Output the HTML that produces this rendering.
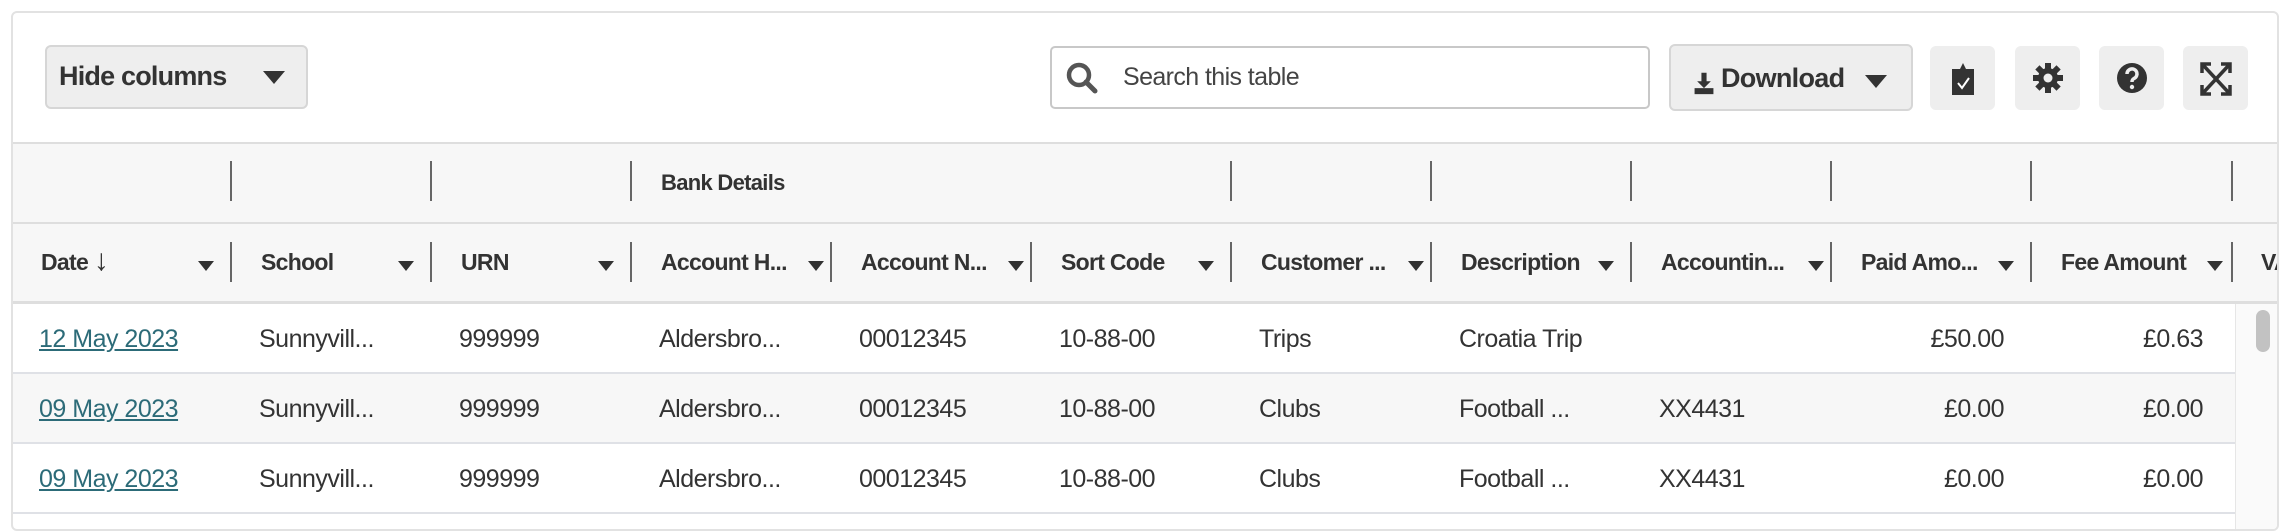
<!DOCTYPE html>
<html><head><meta charset="utf-8"><style>
*{box-sizing:border-box;margin:0;padding:0}
body{width:2290px;height:518px;background:#fff;font-family:"Liberation Sans",sans-serif;color:#333;position:relative;overflow:hidden}
.frame{position:absolute;left:11px;top:11px;width:2268px;height:520px;border:2px solid #e2e2e2;border-radius:6px;background:#fff;overflow:hidden}
.abs{position:absolute}
.btn{position:absolute;background:#eeeeee;border:2px solid #d6d6d6;border-radius:6px}
.hdr1{position:absolute;left:0;top:129px;width:2268px;height:82px;background:#f7f7f7;border-top:2px solid #dedede;border-bottom:2px solid #dedede}
.hdr2{position:absolute;left:0;top:211px;width:2268px;height:80px;background:#f7f7f7;border-bottom:3px solid #dedede}
.sep{position:absolute;width:2px;background:#666;height:40px}
.cell{position:absolute;font-size:24px;white-space:nowrap;letter-spacing:-0.6px}
.h{font-weight:bold;font-size:23px;letter-spacing:-0.7px}
.row{position:absolute;left:0;width:2222px;height:70px;border-bottom:2px solid #dfe1e6}
.tri{display:inline-block;width:0;height:0;border-left:8px solid transparent;border-right:8px solid transparent;border-top:10px solid #333}
a{color:#2c6b78;text-decoration:underline}
</style></head><body>
<div class="frame">
  <div class="btn" style="left:32px;top:32px;width:263px;height:64px"></div>
  <div class="cell" style="left:46px;top:48px;font-size:27px;font-weight:bold;letter-spacing:-0.8px">Hide columns</div>
  <div class="abs" style="left:250px;top:58px"><span class="tri" style="border-left-width:11px;border-right-width:11px;border-top-width:13px"></span></div>

  <div class="abs" style="left:1037px;top:33px;width:600px;height:63px;border:2px solid #c8c8c8;border-radius:5px;background:#fff"></div>
  <svg class="abs" style="left:1051px;top:47px" width="36" height="36" viewBox="0 0 36 36"><circle cx="15" cy="15" r="10" fill="none" stroke="#555" stroke-width="4.5"/><line x1="22" y1="22" x2="31" y2="31" stroke="#555" stroke-width="5" stroke-linecap="round"/></svg>
  <div class="cell" style="left:1110px;top:50px;font-size:25px;color:#444">Search this table</div>

  <div class="btn" style="left:1656px;top:31px;width:244px;height:67px"></div>
  <svg class="abs" style="left:1680px;top:58px" width="22" height="24" viewBox="0 0 24 28"><path d="M9 2h6v10h5l-8 8-8-8h5z" fill="#333"/><rect x="1" y="20" width="22" height="7" fill="#333"/></svg>
  <div class="cell h" style="left:1708px;top:50px;font-size:27px">Download</div>
  <div class="abs" style="left:1852px;top:62px"><span class="tri" style="border-left-width:11px;border-right-width:11px;border-top-width:13px"></span></div>

  <div class="btn" style="left:1917px;top:33px;width:65px;height:64px;border-color:#eee"></div>
  <svg class="abs" style="left:1936px;top:44px" width="28" height="40" viewBox="0 0 28 40"><path d="M3 12h8l3-6 3 6h8v26H3z" fill="#333"/><path d="M9 26l4 5 7-10" stroke="#fff" stroke-width="2" fill="none"/></svg>
  <div class="btn" style="left:2002px;top:33px;width:65px;height:64px;border-color:#eee"></div>
  <svg class="abs" style="left:2018px;top:48px" width="34" height="34" viewBox="0 0 34 34"><g fill="#333"><circle cx="17" cy="17" r="10"/><rect x="14" y="2" width="6" height="30"/><rect x="2" y="14" width="30" height="6"/><rect x="14" y="2" width="6" height="30" transform="rotate(45 17 17)"/><rect x="14" y="2" width="6" height="30" transform="rotate(-45 17 17)"/></g><circle cx="17" cy="17" r="4.5" fill="#eee"/></svg>
  <div class="btn" style="left:2086px;top:33px;width:65px;height:64px;border-color:#eee"></div>
  <svg class="abs" style="left:2102px;top:48px" width="34" height="34" viewBox="0 0 34 34"><circle cx="17" cy="17" r="15" fill="#333"/><path d="M12 13a5 5 0 1 1 7 4.5c-1.5.8-2 1.5-2 3.5" stroke="#eee" stroke-width="3.5" fill="none"/><circle cx="17" cy="26" r="2.2" fill="#eee"/></svg>
  <div class="btn" style="left:2170px;top:33px;width:65px;height:64px;border-color:#eee"></div>
  <svg class="abs" style="left:2186px;top:48px" width="34" height="36" viewBox="0 0 34 36"><g stroke="#333" stroke-width="3.5" fill="none"><path d="M4 4l26 28M30 4L4 32"/><path d="M3 12V3h9M22 3h9v9M31 24v9h-9M12 33H3v-9"/></g></svg>

  <div class="hdr1"></div>
  <div class="hdr2"></div>
  <div class="cell h" style="left:648px;top:157px;font-size:22px">Bank Details</div>

  <div class="cell h" style="left:28px;top:236px">Date <span style="font-weight:normal;font-size:30px;line-height:20px">↓</span></div>
  <div class="cell h" style="left:248px;top:236px">School</div>
  <div class="cell h" style="left:448px;top:236px">URN</div>
  <div class="cell h" style="left:648px;top:236px">Account H...</div>
  <div class="cell h" style="left:848px;top:236px">Account N...</div>
  <div class="cell h" style="left:1048px;top:236px">Sort Code</div>
  <div class="cell h" style="left:1248px;top:236px">Customer ...</div>
  <div class="cell h" style="left:1448px;top:236px">Description</div>
  <div class="cell h" style="left:1648px;top:236px">Accountin...</div>
  <div class="cell h" style="left:1848px;top:236px">Paid Amo...</div>
  <div class="cell h" style="left:2048px;top:236px">Fee Amount</div>
  <div class="cell h" style="left:2248px;top:236px">VA</div>

  <div class="row" style="top:291px;background:#fff"></div>
  <div class="row" style="top:361px;background:#f7f7f7"></div>
  <div class="row" style="top:431px;background:#fff"></div>
  <div class="abs" style="left:2222px;top:291px;width:46px;height:240px;background:#fafafa;border-left:1px solid #e6e6e6"></div>
  <div class="abs" style="left:2243px;top:297px;width:14px;height:42px;background:#c2c2c2;border-radius:7px"></div>
</div>
<style>.d{position:absolute;font-size:25px;white-space:nowrap;letter-spacing:-0.5px}</style>
<div style="position:absolute;left:11px;top:11px">
<div class="sep" style="left:219px;top:150px"></div><div class="sep" style="left:419px;top:150px"></div><div class="sep" style="left:619px;top:150px"></div>
<div class="sep" style="left:1219px;top:150px"></div><div class="sep" style="left:1419px;top:150px"></div><div class="sep" style="left:1619px;top:150px"></div><div class="sep" style="left:1819px;top:150px"></div><div class="sep" style="left:2019px;top:150px"></div><div class="sep" style="left:2220px;top:150px"></div>
<div class="sep" style="left:219px;top:231px"></div><div class="sep" style="left:419px;top:231px"></div><div class="sep" style="left:619px;top:231px"></div><div class="sep" style="left:819px;top:231px"></div><div class="sep" style="left:1019px;top:231px"></div><div class="sep" style="left:1219px;top:231px"></div><div class="sep" style="left:1419px;top:231px"></div><div class="sep" style="left:1619px;top:231px"></div><div class="sep" style="left:1819px;top:231px"></div><div class="sep" style="left:2019px;top:231px"></div><div class="sep" style="left:2220px;top:231px"></div>
<div class="abs" style="left:187px;top:247px"><span class="tri"></span></div>
<div class="abs" style="left:387px;top:247px"><span class="tri"></span></div>
<div class="abs" style="left:587px;top:247px"><span class="tri"></span></div>
<div class="abs" style="left:797px;top:247px"><span class="tri"></span></div>
<div class="abs" style="left:997px;top:247px"><span class="tri"></span></div>
<div class="abs" style="left:1187px;top:247px"><span class="tri"></span></div>
<div class="abs" style="left:1397px;top:247px"><span class="tri"></span></div>
<div class="abs" style="left:1587px;top:247px"><span class="tri"></span></div>
<div class="abs" style="left:1797px;top:247px"><span class="tri"></span></div>
<div class="abs" style="left:1987px;top:247px"><span class="tri"></span></div>
<div class="abs" style="left:2196px;top:247px"><span class="tri"></span></div>

<div class="d" style="left:28px;top:314px"><a>12 May 2023</a></div>
<div class="d" style="left:248px;top:314px">Sunnyvill...</div><div class="d" style="left:448px;top:314px">999999</div><div class="d" style="left:648px;top:314px">Aldersbro...</div><div class="d" style="left:848px;top:314px">00012345</div><div class="d" style="left:1048px;top:314px">10-88-00</div><div class="d" style="left:1248px;top:314px">Trips</div><div class="d" style="left:1448px;top:314px">Croatia Trip</div>
<div class="d" style="left:1870px;width:123px;text-align:right;top:314px">£50.00</div><div class="d" style="left:2070px;width:122px;text-align:right;top:314px">£0.63</div>

<div class="d" style="left:28px;top:384px"><a>09 May 2023</a></div>
<div class="d" style="left:248px;top:384px">Sunnyvill...</div><div class="d" style="left:448px;top:384px">999999</div><div class="d" style="left:648px;top:384px">Aldersbro...</div><div class="d" style="left:848px;top:384px">00012345</div><div class="d" style="left:1048px;top:384px">10-88-00</div><div class="d" style="left:1248px;top:384px">Clubs</div><div class="d" style="left:1448px;top:384px">Football ...</div><div class="d" style="left:1648px;top:384px">XX4431</div>
<div class="d" style="left:1870px;width:123px;text-align:right;top:384px">£0.00</div><div class="d" style="left:2070px;width:122px;text-align:right;top:384px">£0.00</div>

<div class="d" style="left:28px;top:454px"><a>09 May 2023</a></div>
<div class="d" style="left:248px;top:454px">Sunnyvill...</div><div class="d" style="left:448px;top:454px">999999</div><div class="d" style="left:648px;top:454px">Aldersbro...</div><div class="d" style="left:848px;top:454px">00012345</div><div class="d" style="left:1048px;top:454px">10-88-00</div><div class="d" style="left:1248px;top:454px">Clubs</div><div class="d" style="left:1448px;top:454px">Football ...</div><div class="d" style="left:1648px;top:454px">XX4431</div>
<div class="d" style="left:1870px;width:123px;text-align:right;top:454px">£0.00</div><div class="d" style="left:2070px;width:122px;text-align:right;top:454px">£0.00</div>
</div>
</body></html>
